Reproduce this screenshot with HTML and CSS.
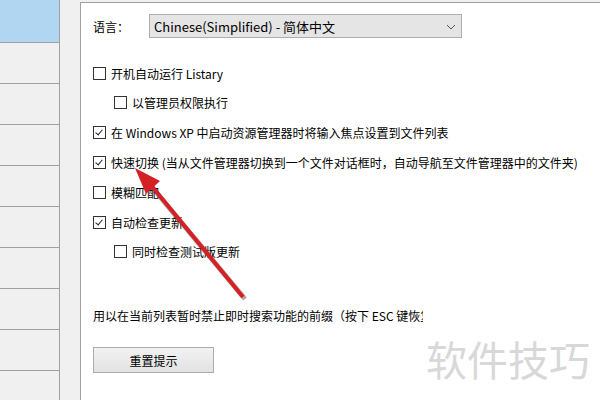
FILE: index.html
```html
<!DOCTYPE html>
<html lang="zh-CN">
  <head>
    <meta charset="UTF-8" />
    <title>Listary 选项</title>
    <link rel="stylesheet" href="styles.css">
  </head>
  <body>
    <div class="app">
      <aside class="nav">
        <div class="nav-item active"></div>
        <div class="nav-item"></div>
        <div class="nav-item"></div>
        <div class="nav-item"></div>
        <div class="nav-item"></div>
        <div class="nav-item"></div>
        <div class="nav-item"></div>
        <div class="nav-item"></div>
        <div class="nav-item"></div>
        <div class="nav-item"></div>
      </aside>
      <main class="panel">
        <div class="lang-row">
          <span class="lang-label">语言：</span>
          <div class="select">
            <span>Chinese(Simplified) - 简体中文</span>
            <svg class="chevron" width="10" height="6" viewBox="0 0 10 6">
              <path d="M1 1 L5 5 L9 1" fill="none" stroke="#555" stroke-width="1" />
            </svg>
          </div>
        </div>
        <div class="options">
          <label class="opt"><span class="box"></span>开机自动运行 Listary</label>
          <label class="opt sub tight"><span class="box"></span>以管理员权限执行</label>
          <label class="opt"><span class="box checked"></span>在 Windows XP 中启动资源管理器时将输入焦点设置到文件列表</label>
          <label class="opt"><span class="box checked"></span>快速切换 (当从文件管理器切换到一个文件对话框时，自动导航至文件管理器中的文件夹)</label>
          <label class="opt"><span class="box"></span>模糊匹配</label>
          <label class="opt"><span class="box checked"></span>自动检查更新</label>
          <label class="opt sub tight"><span class="box"></span>同时检查测试版更新</label>
        </div>
        <p class="hint">用以在当前列表暂时禁止即时搜索功能的前缀（按下 ESC 键恢复）</p>
        <button class="reset">重置提示</button>
        <div class="watermark">软件技巧</div>
      </main>
      <svg class="arrow" width="600" height="400" viewBox="0 0 600 400">
        <line x1="245" y1="299" x2="151" y2="186" stroke="rgba(60,0,0,0.35)" stroke-width="5" />
        <line x1="243" y1="297" x2="150" y2="184" stroke="#d42126" stroke-width="4" />
        <polygon points="135,168 160,181 146,194" fill="#d42126" />
      </svg>
    </div>
  </body>
</html>
```

FILE: styles.css
```css
body {
  margin: 0;
  font-family: "Noto Sans CJK SC", "Noto Sans", sans-serif;
  font-size: 12px;
  color: #000;
  background: #f0f0f0;
}
.app {
  position: relative;
  display: flex;
  width: 600px;
  height: 400px;
  overflow: hidden;
}
.nav {
  width: 59px;
  border-right: 1px solid #a0a0a0;
  background: #f0f0f0;
  flex-shrink: 0;
}
.nav-item {
  height: 40px;
  border-bottom: 1px solid #a0a0a0;
}
.nav-item.active {
  height: 42px;
  background: #b1d6f1;
}
.panel {
  position: relative;
  margin: 2px 0 0 20px;
  flex: 1;
  background: #fff;
  border-left: 1px solid #a0a0a0;
  border-top: 1px solid #a0a0a0;
  padding: 11px 0 0 12px;
}
.lang-row {
  display: flex;
  align-items: center;
  height: 24px;
}
.lang-label {
  width: 56px;
}
.select {
  display: flex;
  align-items: center;
  justify-content: space-between;
  box-sizing: border-box;
  width: 313px;
  height: 24px;
  padding: 0 5px 0 4px;
  background: #e5e5e5;
  border: 1px solid #adadad;
  font-size: 13px;
}
.chevron {
  margin-top: 1px;
}
.options {
  display: flex;
  flex-direction: column;
  margin-top: 27px;
}
.opt {
  display: flex;
  align-items: center;
  height: 16px;
  margin-top: 14px;
  white-space: nowrap;
}
.opt:first-child {
  margin-top: 0;
}
.opt.sub {
  padding-left: 21px;
}
.opt.tight {
  margin-top: 13px;
}
.box {
  position: relative;
  box-sizing: border-box;
  width: 13px;
  height: 13px;
  margin-right: 5px;
  border: 1px solid #333;
  background: #fff;
  flex-shrink: 0;
}
.box.checked::after {
  content: "";
  position: absolute;
  left: 3px;
  top: 1px;
  width: 3px;
  height: 6px;
  border-right: 1px solid #222;
  border-bottom: 1px solid #222;
  transform: rotate(40deg);
}
.hint {
  width: 330px;
  margin: 49px 0 0;
  height: 16px;
  line-height: 16px;
  white-space: nowrap;
  overflow: hidden;
}
.reset {
  display: block;
  margin-top: 23px;
  width: 121px;
  height: 26px;
  font-family: inherit;
  font-size: 12px;
  color: #000;
  border: 1px solid #acacac;
  background: linear-gradient(#f2f2f2, #e2e2e2);
}
.watermark {
  position: absolute;
  left: 345px;
  top: 325px;
  font-size: 41px;
  color: #d8d8d8;
  white-space: nowrap;
}
.arrow {
  position: absolute;
  left: 0;
  top: 0;
  pointer-events: none;
}
```
